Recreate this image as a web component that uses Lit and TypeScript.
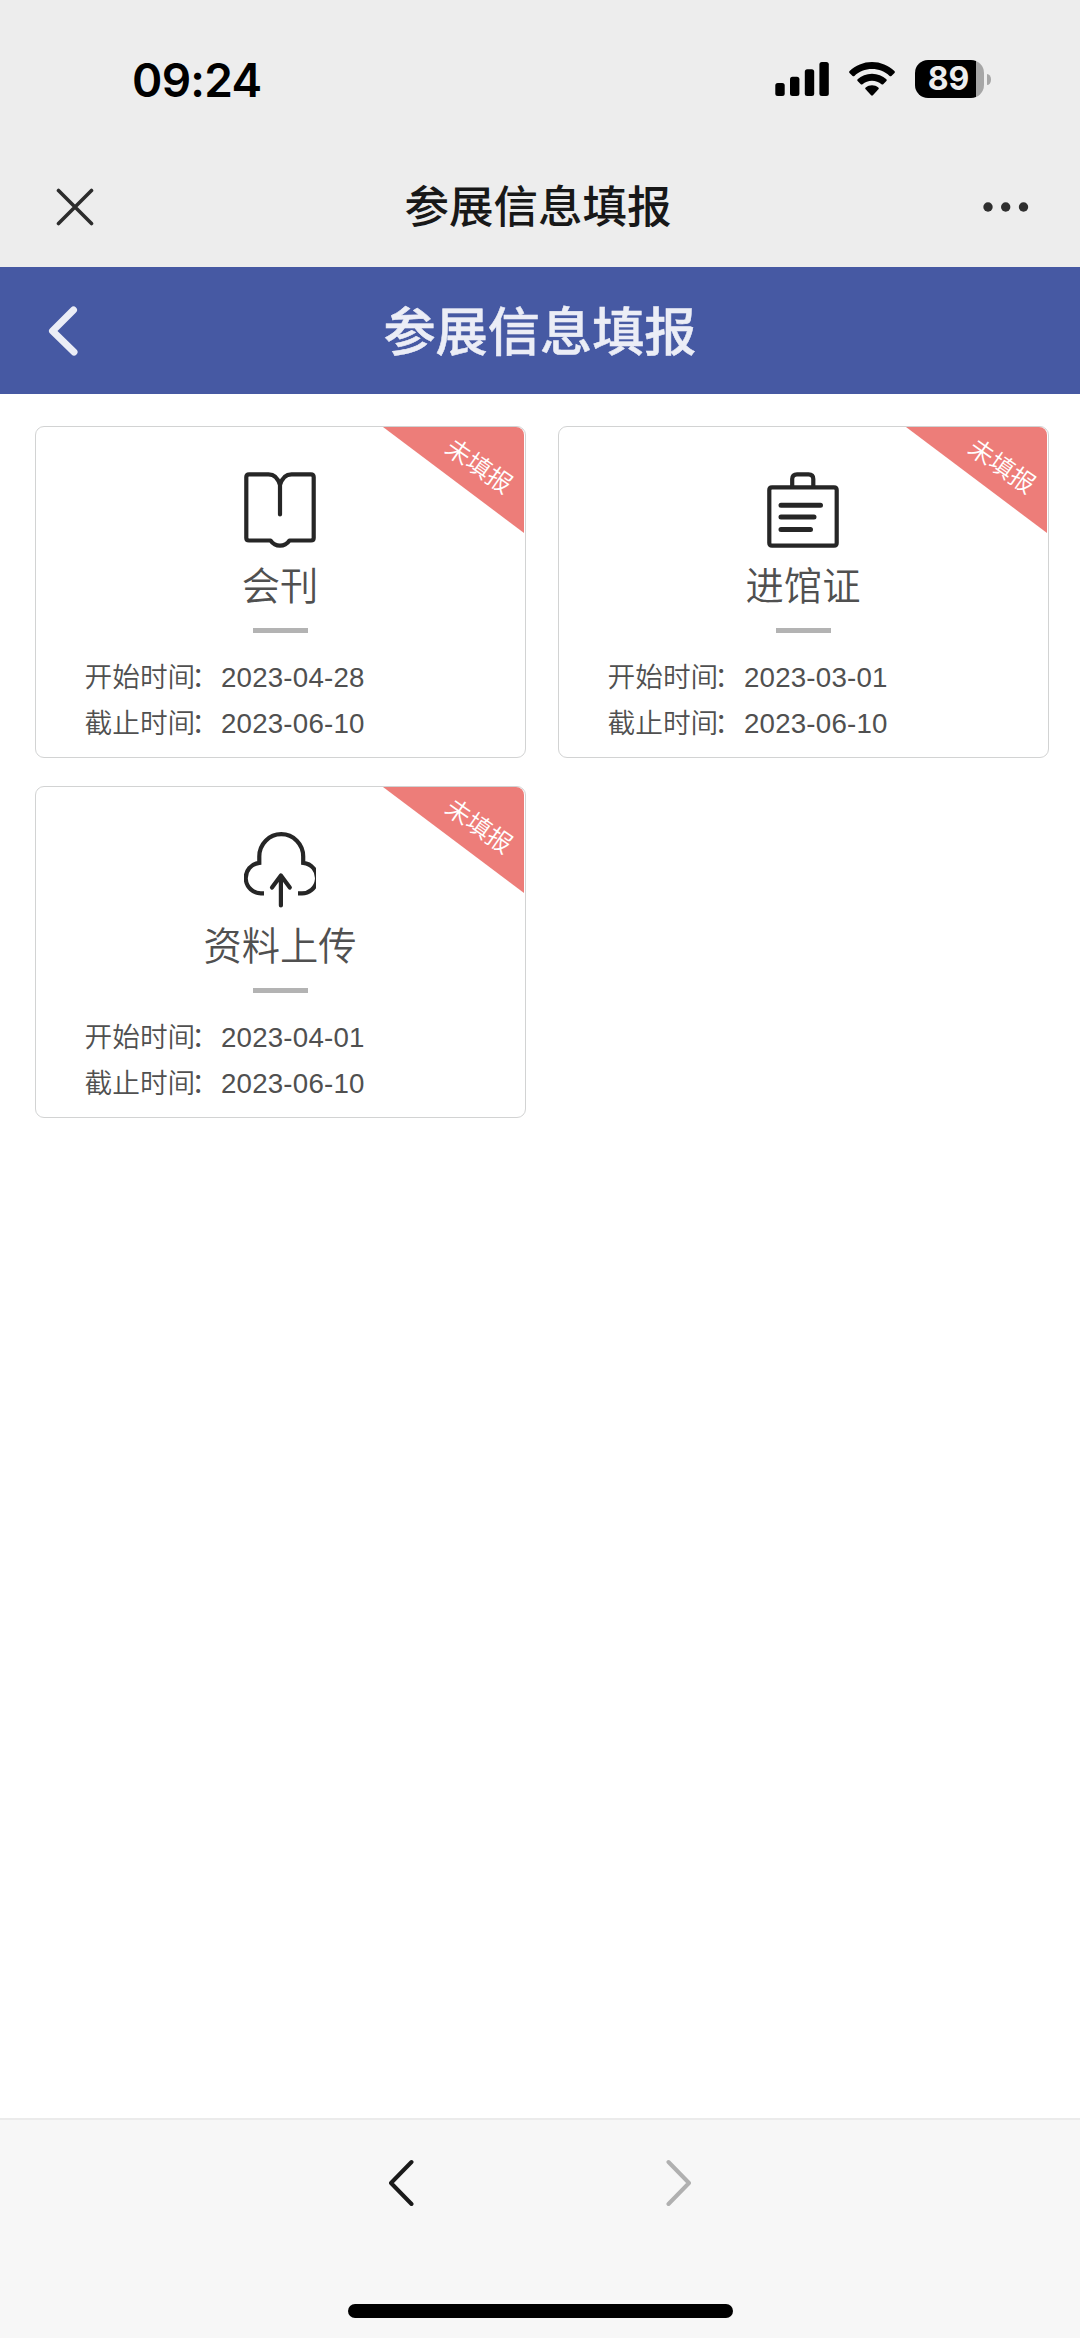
import { LitElement, html, css, svg } from "lit";
import { customElement, property } from "lit/decorators.js";

interface Entry {
  icon: "book" | "badge" | "upload";
  title: string;
  start: string;
  end: string;
  status: string;
}

const ENTRIES: Entry[] = [
  { icon: "book", title: "会刊", start: "2023-04-28", end: "2023-06-10", status: "未填报" },
  { icon: "badge", title: "进馆证", start: "2023-03-01", end: "2023-06-10", status: "未填报" },
  { icon: "upload", title: "资料上传", start: "2023-04-01", end: "2023-06-10", status: "未填报" },
];

const ICONS = {
  book: svg`
    <path d="M36 42.500V13C34 6 30 2.300 24.500 2.300H5Q2.300 2.300 2.300 5V66Q2.300 68.500 5 68.500H26.500C29 72 32 73.700 36 73.700S43 72 45.500 68.500H67Q69.700 68.500 69.700 66V5Q69.700 2.300 67 2.300H47.500C42 2.300 38 6 36 13"/>`,
  badge: svg`
    <path d="M5 15.300H67Q69.700 15.300 69.700 18V71Q69.700 73.700 67 73.700H5Q2.300 73.700 2.300 71V18Q2.300 15.300 5 15.300Z"/>
    <path d="M25.200 15V7Q25.200 2.300 30 2.300H41.500Q46.300 2.300 46.300 7V15"/>
    <path stroke-width="5" d="M14 33.300H53.500M14 45H47M14 57.500H43.500"/>`,
  upload: svg`
    <path stroke-linecap="butt" stroke-linejoin="miter" d="M20 61.300H17.500A15.200 15.300 0 0 1 15.300 30.800V24.500A21.950 22.300 0 0 1 59.200 24.500V30.800A15.200 15.300 0 0 1 56.500 61.300H54"/>
    <path d="M36.900 73.500V44M28 55.500L36.900 43.500L45.800 55.500"/>`,
};

@customElement("entry-card")
export class EntryCard extends LitElement {
  @property({ attribute: false }) entry!: Entry;

  static styles = css`
    :host {
      position: relative;
      display: flex;
      flex-direction: column;
      align-items: center;
      box-sizing: border-box;
      height: 332px;
      padding-top: 45px;
      border: 1px solid #d2d3d3;
      border-radius: 9px;
      background: #fff;
      color: #505050;
    }
    .icon {
      width: 72px;
      height: 76px;
      margin-right: 1px;
      fill: none;
      stroke: #262626;
      stroke-width: 4.2;
      stroke-linecap: round;
      stroke-linejoin: round;
    }
    .title {
      margin-top: 11px;
      padding-right: 1px;
      font-size: 38.3px;
      line-height: 56px;
      font-weight: 350;
    }
    .rule {
      width: 55px;
      height: 5px;
      margin-top: 13px;
      background: #b3b3b3;
    }
    .times {
      align-self: stretch;
      padding: 21.5px 0 0 48.5px;
      font-size: 27.7px;
      line-height: 46.7px;
      font-weight: 350;
    }
    .row {
      display: flex;
    }
    .colon {
      margin: 0 4px 0 -4px;
    }
    .date {
      margin-left: -2px;
      letter-spacing: 0.2px;
    }
    .ribbon {
      position: absolute;
      top: 0;
      right: 1px;
      width: 141px;
      height: 106px;
      border-top-right-radius: 8px;
      background: #ed7d79;
      clip-path: polygon(0 0, 100% 0, 100% 100%);
    }
    .status {
      position: absolute;
      left: 58px;
      top: 21px;
      width: 76px;
      color: #fff;
      font-size: 24.9px;
      font-weight: 350;
      line-height: 36px;
      text-align: center;
      white-space: nowrap;
      transform: rotate(35deg);
    }
  `;

  render() {
    const e = this.entry;
    return html`
      <svg class="icon" viewBox="0 0 72 76">${ICONS[e.icon]}</svg>
      <div class="title">${e.title}</div>
      <div class="rule"></div>
      <div class="times">
        <div class="row"><span>开始时间</span><span class="colon">：</span><span class="date">${e.start}</span></div>
        <div class="row"><span>截止时间</span><span class="colon">：</span><span class="date">${e.end}</span></div>
      </div>
      <div class="ribbon"><div class="status">${e.status}</div></div>
    `;
  }
}

@customElement("app-root")
export class AppRoot extends LitElement {
  static styles = css`
    :host {
      display: flex;
      flex-direction: column;
      width: 1080px;
      height: 2338px;
      overflow: hidden;
      background: #fff;
      font-family: "Liberation Sans", "Noto Sans CJK SC", sans-serif;
    }
    .top {
      height: 267px;
      background: #ededed;
    }
    .statusbar {
      display: flex;
      align-items: center;
      justify-content: space-between;
      height: 158px;
      box-sizing: border-box;
      padding: 0 89.5px 0 132px;
    }
    .clock {
      font: 600 46px/60px Inter, sans-serif;
      letter-spacing: -0.7px;
      color: #000;
      padding-top: 1px;
    }
    .indicators {
      display: flex;
      align-items: center;
    }
    .signal {
      width: 54px;
      height: 34px;
    }
    .wifi {
      width: 46px;
      height: 34px;
      margin-left: 20px;
    }
    .battery {
      display: flex;
      align-items: center;
      margin-left: 20px;
    }
    .level {
      width: 69px;
      height: 38px;
      border-radius: 13px;
      background: linear-gradient(to right, #000 61.5px, #a6a6a6 61.5px);
      color: #ededed;
      font: 700 32px/38px Inter, sans-serif;
      text-align: center;
      text-indent: -1px;
    }
    .nub {
      width: 4px;
      height: 11px;
      margin-left: 3px;
      border-radius: 0 4px 4px 0 / 0 5.5px 5.5px 0;
      background: #a6a6a6;
    }
    .navbar {
      display: grid;
      grid-template-columns: 200px 1fr 200px;
      align-items: center;
      height: 97px;
    }
    .close {
      width: 38px;
      height: 38px;
      margin-left: 56px;
      fill: none;
      stroke: #2c2c2c;
      stroke-width: 3.6;
      stroke-linecap: round;
    }
    .page {
      text-align: center;
      font-size: 44.5px;
      font-weight: 500;
      line-height: 60px;
      color: #181818;
      padding: 3px 4px 0 0;
    }
    .more {
      justify-self: end;
      width: 46px;
      height: 10px;
      margin-right: 51px;
      fill: #2f2f2f;
    }
    .header {
      display: grid;
      grid-template-columns: 200px 1fr 200px;
      align-items: center;
      height: 126.5px;
      background: #4659a3;
      color: #ebedf6;
    }
    .back {
      width: 30px;
      height: 50px;
      margin: 1px 0 0 47.5px;
      fill: none;
      stroke: #ebedf6;
      stroke-width: 7;
      stroke-linecap: round;
      stroke-linejoin: round;
    }
    .heading {
      text-align: center;
      font-size: 52.2px;
      font-weight: 500;
      line-height: 70px;
      padding-top: 5px;
      -webkit-text-stroke: 0.5px #ebedf6;
    }
    .grid {
      flex: 1;
      display: grid;
      grid-template-columns: 491px 491px;
      align-content: start;
      gap: 28px 32px;
      padding: 32.5px 31px 0 35px;
    }
    .toolbar {
      display: flex;
      flex-direction: column;
      align-items: center;
      justify-content: space-between;
      box-sizing: border-box;
      height: 220px;
      border-top: 2px solid #ebebeb;
      padding: 39px 0 20px;
      background: #f7f7f7;
    }
    .arrows {
      display: flex;
      justify-content: space-between;
      width: 304px;
    }
    .arrow {
      width: 26px;
      height: 48px;
      fill: none;
      stroke: #1a1a1a;
      stroke-width: 4;
      stroke-linecap: round;
      stroke-linejoin: round;
    }
    .arrow.off {
      stroke: #b0b0b0;
    }
    .home {
      width: 385px;
      height: 14px;
      border-radius: 7px;
      background: #000;
    }
  `;

  render() {
    return html`
      <div class="top">
        <div class="statusbar">
          <div class="clock">09:24</div>
          <div class="indicators">
            <svg class="signal" viewBox="0 0 54 34">
              <rect x="0.300" y="21" width="9.400" height="13" rx="2.500" />
              <rect x="15" y="14.700" width="9.400" height="19.300" rx="2.500" />
              <rect x="29.800" y="7.300" width="9.400" height="26.700" rx="2.500" />
              <rect x="44.400" y="0" width="9.400" height="34" rx="2.500" />
            </svg>
            <svg class="wifi" viewBox="0 0 46 34">
              <path d="M23 0C31.600 0 39.500 3.400 45.400 9.100Q46.300 10 45.500 10.900L42.400 13.900Q41.500 14.700 40.600 13.900C35.900 9.600 29.800 7 23 7S10.100 9.600 5.400 13.900Q4.500 14.700 3.600 13.900L0.500 10.900Q-0.300 10 0.600 9.100C6.500 3.400 14.400 0 23 0Z" />
              <path d="M23 11.700C28.600 11.700 33.600 13.800 37.400 17.300Q38.200 18.200 37.400 19L34.200 22.200Q33.400 23 32.500 22.200C29.900 20 26.600 18.700 23 18.700S16.100 20 13.500 22.200Q12.600 23 11.800 22.200L8.600 19Q7.800 18.200 8.600 17.300C12.400 13.800 17.400 11.700 23 11.700Z" />
              <path d="M23 23.300C25.300 23.300 27.500 24.100 29.300 25.500Q30.200 26.300 29.400 27.200L23.900 33.200Q23 34.100 22.100 33.200L16.600 27.200Q15.800 26.300 16.700 25.500C18.500 24.100 20.700 23.300 23 23.300Z" />
            </svg>
            <div class="battery">
              <div class="level">89</div>
              <div class="nub"></div>
            </div>
          </div>
        </div>
        <div class="navbar">
          <svg class="close" viewBox="0 0 38 38"><path d="M2.500 2.500L35.500 35.500M35.500 2.500L2.500 35.500" /></svg>
          <div class="page">参展信息填报</div>
          <svg class="more" viewBox="0 0 46 10">
            <circle cx="5" cy="5" r="4.700" />
            <circle cx="22.700" cy="5" r="4.700" />
            <circle cx="40.500" cy="5" r="4.700" />
          </svg>
        </div>
      </div>
      <div class="header">
        <svg class="back" viewBox="0 0 30 50"><path d="M25.500 4L4.500 25L26 46" /></svg>
        <div class="heading">参展信息填报</div>
      </div>
      <div class="grid">${ENTRIES.map((e) => html`<entry-card .entry=${e}></entry-card>`)}</div>
      <div class="toolbar">
        <div class="arrows">
          <svg class="arrow" viewBox="0 0 26 48"><path d="M23.500 3L3 24L23.500 45" /></svg>
          <svg class="arrow off" viewBox="0 0 26 48"><path d="M2.500 3L23 24L2.500 45" /></svg>
        </div>
        <div class="home"></div>
      </div>
    `;
  }
}
